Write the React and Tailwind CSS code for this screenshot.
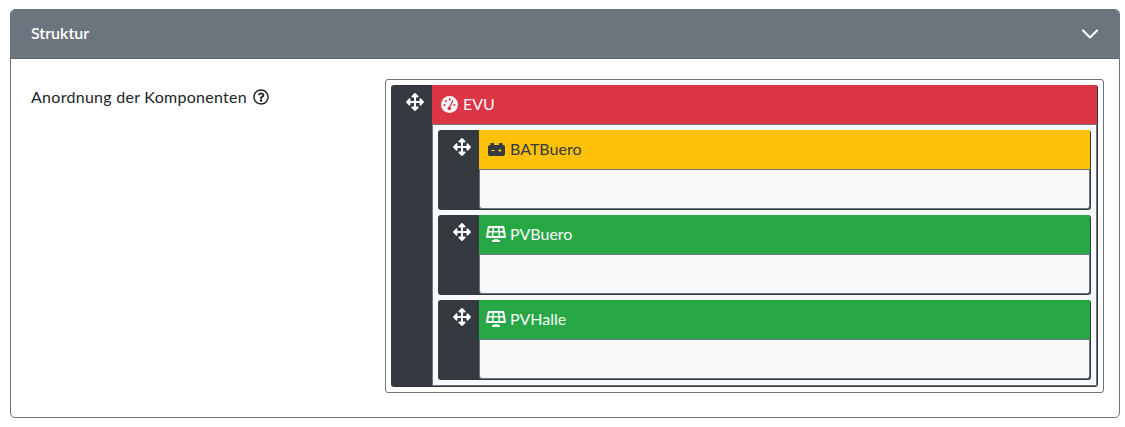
import { FaArrowsAlt, FaSolarPanel, FaRegQuestionCircle } from 'react-icons/fa'
import { LuChevronDown } from 'react-icons/lu'

function GaugeIcon() {
  return (
    <svg width="17" height="17" viewBox="0 0 17 17" className="shrink-0">
      <circle cx="8.5" cy="8.5" r="8.5" fill="#f8f9fa" />
      <g fill="#dc3545">
        <circle cx="3.6" cy="9" r="1.1" />
        <circle cx="5" cy="5" r="1.1" />
        <circle cx="8.7" cy="3.4" r="1.1" />
        <circle cx="13.4" cy="9" r="1.1" />
        <circle cx="8.3" cy="12.4" r="1.8" />
      </g>
      <path d="M8.3 12 L11.8 4.8" stroke="#dc3545" strokeWidth="1.3" strokeLinecap="round" />
    </svg>
  )
}

function BatteryIcon() {
  return (
    <svg width="17" height="13" viewBox="0 0 17 13" className="shrink-0">
      <path
        d="M2.5 0h3.5v2h5V0h3.5v2h.5a2 2 0 0 1 2 2v7a2 2 0 0 1-2 2H2a2 2 0 0 1-2-2V4a2 2 0 0 1 2-2h.5z"
        fill="#343a40"
      />
      <path d="M3.5 7.5h3.2M10.2 7.5h3.4M11.9 5.8v3.4" stroke="#ffc107" strokeWidth="1" />
    </svg>
  )
}

const children = [
  { name: 'BATBuero', icon: <BatteryIcon />, header: 'bg-[#ffc107] text-[#343a40]', gap: 'gap-[5px]', pad: 'pl-[9px]' },
  { name: 'PVBuero', icon: <FaSolarPanel size={20} />, header: 'bg-[#28a745] text-[#f8f9fa]', gap: 'gap-[4px]', pad: 'pl-[7px]' },
  { name: 'PVHalle', icon: <FaSolarPanel size={20} />, header: 'bg-[#28a745] text-[#f8f9fa]', gap: 'gap-[4px]', pad: 'pl-[7px]' },
]

function Handle({ children }) {
  return (
    <div className="w-[41px] shrink-0 flex justify-center pt-[8px] pl-[6px] text-white">
      {children}
    </div>
  )
}

function ChildNode({ item }) {
  return (
    <div className="flex h-[80px] bg-[#343a40] rounded-[3px] pr-px pb-px">
      <Handle>
        <FaArrowsAlt size={18} />
      </Handle>
      <div className="flex-1 flex flex-col min-w-0">
        <div className={`h-[39px] flex items-center pb-[1px] ${item.gap} ${item.pad} text-[16px] ${item.header}`}>
          {item.icon}
          <span className="-mt-[1px]">{item.name}</span>
        </div>
        <div className="flex-1 bg-[#f8f9fa] border border-[#6c757d] rounded-b-[3px]" />
      </div>
    </div>
  )
}

export default function App() {
  return (
    <div className="w-[1125px] h-[427px] bg-white pt-[9px] pl-[10px] pr-[5px] font-['Lato',sans-serif] text-[#212529]">
      <div className="h-[409px] border border-[#6c757d] rounded-[5px] overflow-hidden">
        <div className="h-[50px] -mt-px -mx-px bg-[#6c757d] border-b border-[#5c656d] flex items-center justify-between pl-[21px] pr-[16px] text-white">
          <span className="text-[16px] font-semibold -mt-[2px]">Struktur</span>
          <LuChevronDown size={28} strokeWidth={1.8} />
        </div>
        <div className="flex pt-[20px] pl-[20px]">
          <div className="w-[354px] shrink-0 flex items-start gap-[6px] pt-[6px] text-[16px] leading-[24px] tracking-[0.28px]">
            <span>Anordnung der Komponenten</span>
            <FaRegQuestionCircle size={16} className="mt-[4px]" />
          </div>
          <div className="w-[719px] h-[314px] border border-[#6c757d] rounded-[3px] p-[5px]">
            <div className="h-[302px] flex bg-[#343a40] rounded-[3px] pr-px pb-px">
              <Handle>
                <FaArrowsAlt size={18} />
              </Handle>
              <div className="flex-1 flex flex-col min-w-0">
                <div className="h-[39px] bg-[#dc3545] text-[#f8f9fa] flex items-center gap-[5px] pl-[9px] text-[16px]">
                  <GaugeIcon />
                  <span className="-mt-[1px]">EVU</span>
                </div>
                <div className="flex-1 bg-[#f8f9fa] border border-[#6c757d] pt-[5px] pl-[5px] pr-[5px] flex flex-col gap-[5px]">
                  {children.map((item) => (
                    <ChildNode key={item.name} item={item} />
                  ))}
                </div>
              </div>
            </div>
          </div>
        </div>
      </div>
    </div>
  )
}
